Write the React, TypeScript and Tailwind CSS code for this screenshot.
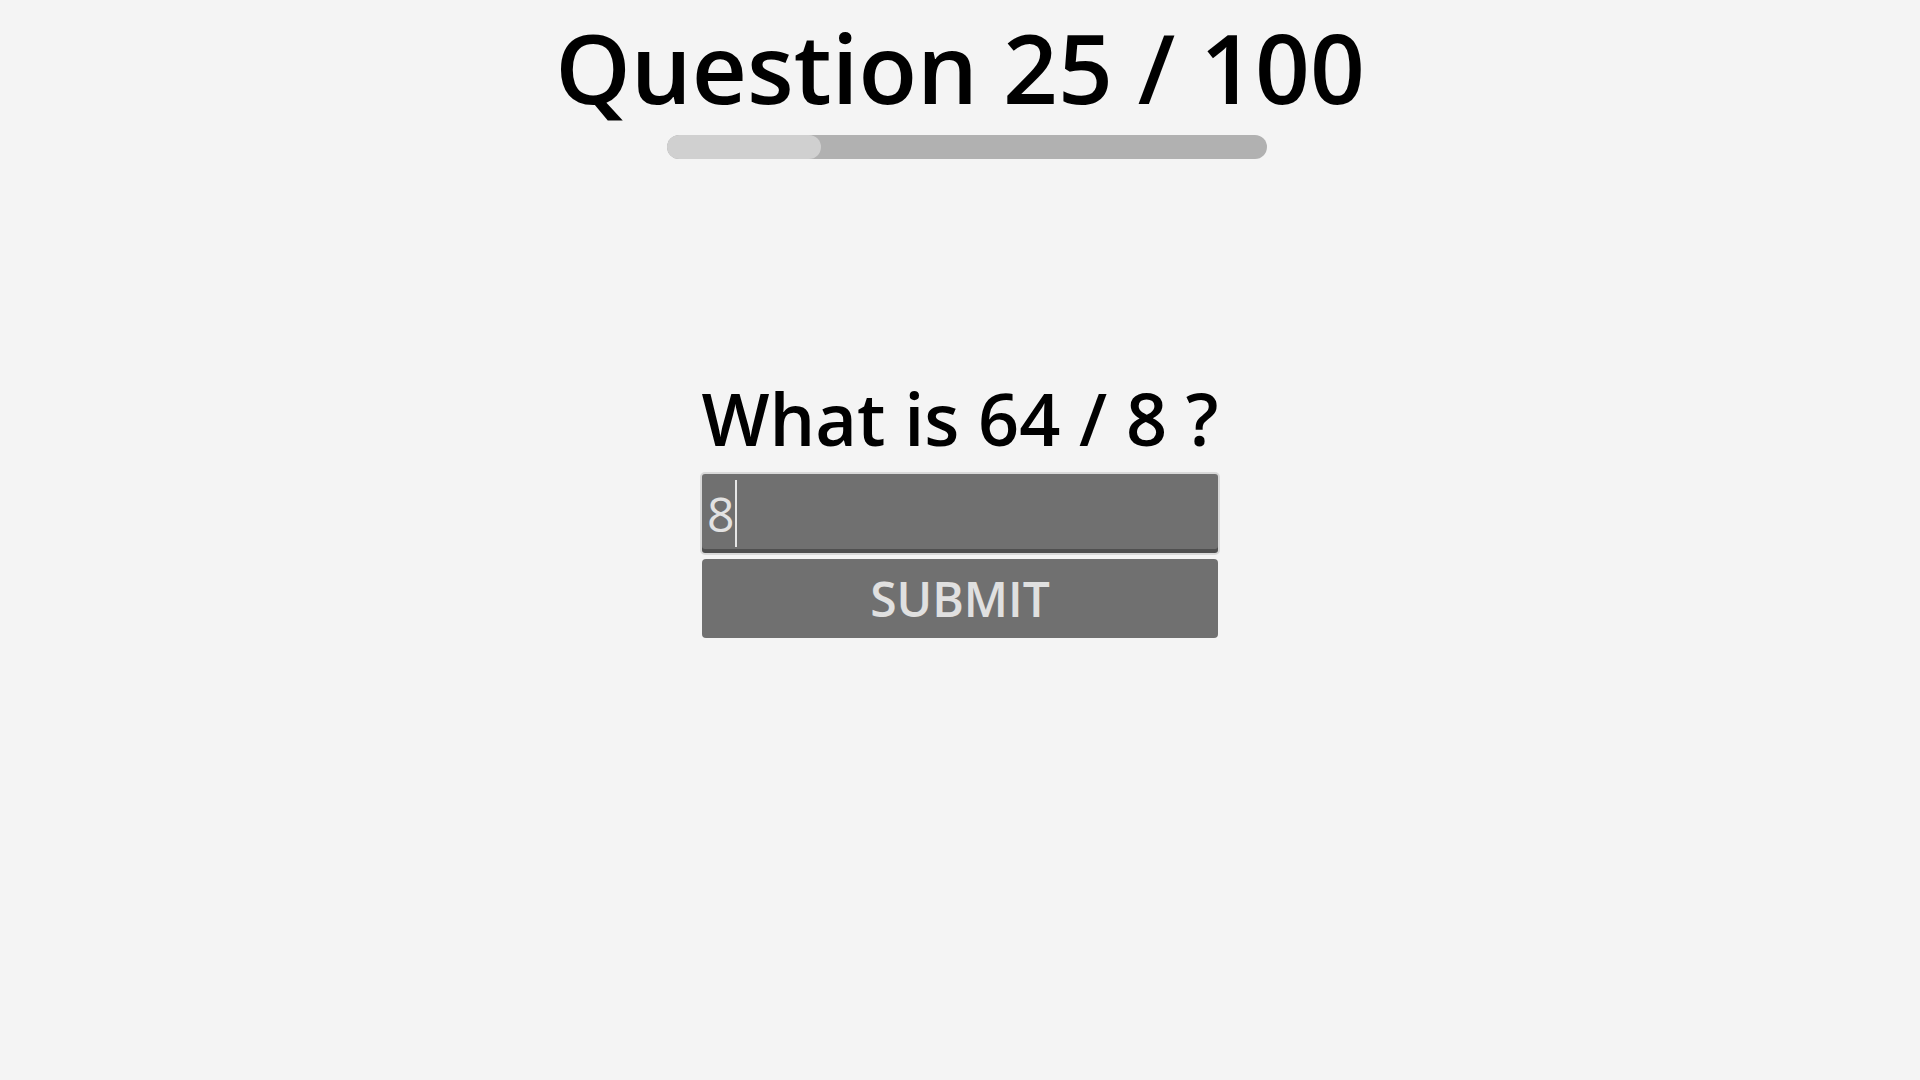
export default function App() {
  const current = 25
  const total = 100

  return (
    <div className="min-h-screen bg-[#f4f4f4] flex flex-col items-center font-['Open_Sans','Noto_Sans',sans-serif] text-black">
      <h1 className="text-[96px] leading-none font-semibold pt-[19px]">
        Question {current} / {total}
      </h1>

      <div className="mt-[20px] ml-[14px] w-[600px] h-[24px] rounded-full bg-[#b1b1b1] overflow-hidden">
        <div className="h-full rounded-full bg-[#d0d0d0]" style={{ width: `${(current / total) * 100 + 0.7}%` }} />
      </div>

      <div className="mt-[223px] flex flex-col items-center">
        <p className="text-[72px] leading-none font-semibold">What is 64 / 8 ?</p>

        <div className="mt-[18px] w-[520px] h-[83px] rounded-[5px] border-2 border-[#d9d9d9] bg-[#707070] shadow-[inset_0_-4px_0_#4f4f4f] flex items-center pl-[5px]">
          <span className="text-[48px] leading-none text-[#e2e2e2]">8</span>
          <span className="ml-[1px] w-[2px] h-[67px] bg-[#e6e6e6]" />
        </div>

        <button className="mt-[4px] w-[516px] h-[79px] rounded-[4px] bg-[#707070] text-[48px] leading-none font-semibold text-[#e0e0e0] flex items-center justify-center">
          SUBMIT
        </button>
      </div>
    </div>
  )
}
